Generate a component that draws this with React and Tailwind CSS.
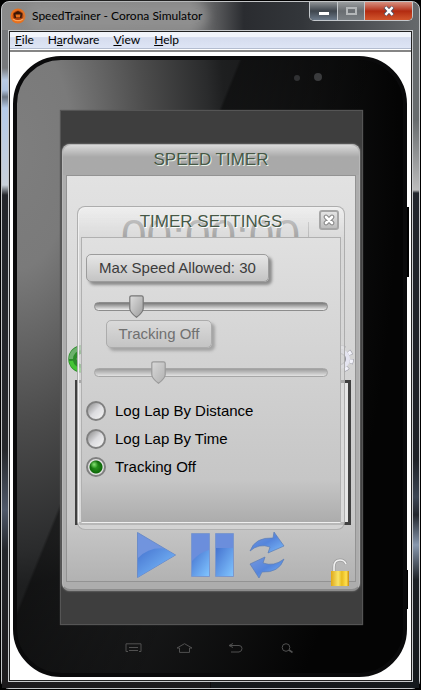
import { useState } from "react";

const menus = [
  ["", "F", "ile"],
  ["H", "a", "rdware"],
  ["", "V", "iew"],
  ["", "H", "elp"],
];

function TitleBar() {
  return (
    <header className="flex h-7 items-start pl-2">
      <div className="flex h-7 flex-1 items-center gap-[6px]">
        <svg viewBox="0 0 16 16" className="size-4 shrink-0" aria-hidden="true">
          <circle cx="8" cy="8" r="7.5" fill="#e8701c" />
          <circle cx="8" cy="8" r="5.4" fill="#a93a08" />
          <path d="M3.5 5.5 L8 3 L12.5 5.5 L11.5 10 H4.5 Z" fill="#3a1606" />
          <path d="M5.5 6.5 h5 l-.6 3 h-3.8 Z" fill="#e8701c" />
          <path d="M3 11 Q8 14.5 13 11" stroke="#ffa458" strokeWidth="1.4" fill="none" />
        </svg>
        <h1 className="rounded-full bg-[#969696]/60 font-[Lato,sans-serif] text-xs leading-4 whitespace-nowrap text-black shadow-[0_0_8px_6px_rgba(150,150,150,0.6)]">
          SpeedTrainer - Corona Simulator
        </h1>
      </div>
      <div className="mr-[6px] flex h-[19px] shrink-0 overflow-hidden rounded-b-[5px] border border-t-0 border-[#c4c8cc]">
        <button aria-label="Minimize" className="flex w-7 items-center justify-center border-r border-[#c4c8cc] bg-linear-to-b from-[#8f9396] via-[#3f464e] via-50% to-[#6c7a8a]">
          <span className="mt-1 h-[3px] w-[10px] bg-white" />
        </button>
        <button aria-label="Maximize" className="flex w-[27px] items-center justify-center border-r border-[#c4c8cc] bg-linear-to-b from-[#9a9d9f] via-[#696d71] via-50% to-[#7b8084]">
          <span className="h-[8px] w-[11px] border-2 border-[#b4b7b9]" />
        </button>
        <button aria-label="Close" className="flex w-[47px] items-center justify-center bg-linear-to-b from-[#d68f80] via-[#b22a10] via-50% to-[#d2552c]">
          <svg viewBox="0 0 12 10" className="h-[10px] w-3" aria-hidden="true">
            <path d="M2 1 L10 9 M10 1 L2 9" stroke="#4a4f63" strokeWidth="4" />
            <path d="M2.4 1.2 L9.6 8.8 M9.6 1.2 L2.4 8.8" stroke="#fff" strokeWidth="2.4" />
          </svg>
        </button>
      </div>
    </header>
  );
}

function MenuBar() {
  return (
    <nav className="flex h-[17px] items-center gap-[14px] border-b border-[#b4bdd0] bg-linear-to-b from-[#f2f5fb] from-30% via-[#d5dcee] via-35% to-[#dee5f5] pl-[5px]">
      {menus.map(([before, key, after]) => (
        <button key={key + after} className="font-[Lato,sans-serif] text-xs leading-4 text-black">
          {before}
          <u>{key}</u>
          {after}
        </button>
      ))}
    </nav>
  );
}

function Slider({ label, max, value, onChange, faded }) {
  const ratio = value / max;
  return (
    <div className={faded ? "relative flex h-[23px] items-center opacity-60" : "relative flex h-[23px] items-center"}>
      <input
        type="range"
        aria-label={label}
        min="0"
        max={max}
        value={value}
        onChange={(e) => onChange(Number(e.target.value))}
        className="block h-[9px] w-full appearance-none rounded-full border border-[#8c8c8c] bg-linear-to-b from-[#7a7a7a] via-[#b4b4b4] via-50% to-[#efefef] [&::-webkit-slider-thumb]:size-[15px] [&::-webkit-slider-thumb]:appearance-none [&::-webkit-slider-thumb]:opacity-0"
      />
      <svg
        viewBox="0 0 15 23"
        className="pointer-events-none absolute top-0 h-[23px] w-[15px]"
        style={{ left: `calc((100% - 15px) * ${ratio})` }}
        aria-hidden="true"
      >
        <defs>
          <linearGradient id="thumb" x1="0" y1="0" x2="1" y2="1">
            <stop offset="0" stopColor="#dedede" />
            <stop offset="1" stopColor="#9c9c9c" />
          </linearGradient>
        </defs>
        <path d="M2.5 .8 H12.5 Q14.2 .8 14.2 2.5 V14 Q13.500 18 7.5 22.3 Q1.500 18 .8 14 V2.5 Q.8 .8 2.5 .8 Z" fill="url(#thumb)" stroke="#777" strokeWidth="1.2" />
      </svg>
    </div>
  );
}

const options = ["Log Lap By Distance", "Log Lap By Time", "Tracking Off"];

function SettingsDialog() {
  const [speed, setSpeed] = useState(30);
  const [lap, setLap] = useState(26);
  const [mode, setMode] = useState("Tracking Off");
  return (
    <section
      role="dialog"
      aria-labelledby="dialog-title"
      className="absolute inset-x-[10px] top-[30px] rounded-lg border border-[#a2a2a2]/80 bg-linear-to-b from-[#f2f2f2]/80 via-[#d6d6d6]/60 via-10% to-[#d6d6d6]/80 px-[3px] pb-[6px] shadow-[inset_1px_1px_0_#f0f0f0]"
    >
      <header className="relative flex h-[30px] items-center justify-center">
        <h3 id="dialog-title" className="text-[17px] leading-5 text-[#465846] [text-shadow:1px_1px_0_#fff]">
          TIMER SETTINGS
        </h3>
        <button aria-label="Close settings" className="absolute top-[3px] right-[2px] flex size-5 items-center justify-center rounded-[3px] border-2 border-[#a6a6a6] bg-linear-to-b from-[#e4e4e4] to-[#bdbdbd]">
          <svg viewBox="0 0 12 12" className="size-3 shrink-0" aria-hidden="true">
            <path d="M3 3 L9 9 M9 3 L3 9" stroke="#888" strokeWidth="4.6" strokeLinecap="round" />
            <path d="M3 3 L9 9 M9 3 L3 9" stroke="#fff" strokeWidth="2.6" strokeLinecap="round" />
          </svg>
        </button>
      </header>
      <div className="h-[286px] border border-[#b0b0b0] border-b-[#efefef] bg-linear-to-b from-[#e0e0e0] via-[#c6c6c6] via-85% to-[#acacac] pt-4 pr-3 pl-1 text-[15px] leading-5">
        <output className="flex h-7 w-[183px] items-center justify-center rounded-[5px] border border-[#9c9c9c] bg-linear-to-b from-[#e6e6e6] to-[#c4c4c4] text-[#3c3c3c] shadow-[3px_3px_3px_#8c8c8c]">
          Max Speed Allowed: {speed}
        </output>
        <div className="mt-[13px] pl-2">
          <Slider label="Max speed allowed" max={190} value={speed} onChange={setSpeed} />
        </div>
        <output className="mt-[2px] ml-5 flex h-7 w-[106px] items-center justify-center rounded-[5px] border border-[#acacac] bg-linear-to-b from-[#dadada] to-[#c4c4c4] text-[#707070] shadow-[3px_3px_3px_#a4a4a4]">
          Tracking Off
        </output>
        <div className="mt-[13px] pl-2">
          <Slider label="Lap tracking" max={100} value={lap} onChange={setLap} faded />
        </div>
        <fieldset className="mt-[17px] flex flex-col gap-2">
          {options.map((o) => (
            <label key={o} className="flex h-5 items-center gap-[9px] text-black">
              <input
                type="radio"
                name="mode"
                checked={mode === o}
                onChange={() => setMode(o)}
                className="size-5 appearance-none rounded-full border-2 border-[#808080] bg-linear-to-br from-[#8a8a8a] via-[#dcdcdf] via-50% to-[#f6f6f6] checked:bg-[radial-gradient(circle_at_38%_34%,rgba(160,255,140,0.8)_0,transparent_4px),radial-gradient(circle,#2a9a20_0,#0f6a0a_6px,#e0e0e0_7px)]"
              />
              {o}
            </label>
          ))}
        </fieldset>
      </div>
    </section>
  );
}

function Controls() {
  return (
    <div className="flex h-[56px] items-center justify-center gap-[15px] pt-1">
      <svg width="0" height="0" className="absolute" aria-hidden="true">
        <defs>
          <linearGradient id="blue" x1="0" y1="0" x2="1" y2="1">
            <stop offset="0" stopColor="#7898dc" />
            <stop offset=".5" stopColor="#5585dc" />
            <stop offset="1" stopColor="#7cbcfa" />
          </linearGradient>
          <linearGradient id="deep" x1="0" y1="0" x2="1" y2="1">
            <stop offset="0" stopColor="#4674d0" />
            <stop offset="1" stopColor="#80c4ff" />
          </linearGradient>
        </defs>
      </svg>
      <button aria-label="Start">
        <svg viewBox="0 0 39 46" className="block h-[46px] w-[39px]">
          <path d="M.5 .5 L38.5 23 L.5 45.5 Z" fill="#7194de" stroke="#6b8cc8" />
          <path d="M1 26 Q12 15 27 16.500 L38 23 L1 45 Z" fill="url(#deep)" />
        </svg>
      </button>
      <button aria-label="Pause">
        <svg viewBox="0 0 43 44" className="block h-11 w-[43px]">
          <path d="M.5 .5 H18.500 V43.500 H.5 Z M24.500 .5 H42.500 V43.500 H24.500 Z" fill="#6b8edc" stroke="#7c98cc" />
          <path d="M1 28 Q9 19 18 17 V43 H1 Z" fill="url(#deep)" />
          <path d="M25 15 H42 V43 H25 Z" fill="url(#deep)" />
        </svg>
      </button>
      <button aria-label="Reset">
        <svg viewBox="0 0 36 48" className="block h-12 w-9" fill="url(#blue)" stroke="#5c7cb4" strokeWidth=".7">
          <path d="M1 20 Q6 6 24 7 L25 1 L35 15 L19 22 L21 16 Q10 12 1 20 Z" />
          <path d="M35 28 Q30 42 13 41 L10 47 L1 33 L16 26 L14 32 Q25 36 35 28 Z" />
        </svg>
      </button>
    </div>
  );
}

function TimerPanel() {
  return (
    <main className="relative mt-[33px] mr-[2px] mb-[33px] ml-[1px] rounded-lg border border-[#b8b8b8] border-b-2 border-b-[#8c8c8c] bg-[#adadad] px-[3px] pb-[7px] shadow-[0_0_2px_#999]">
      <h2 className="-mx-[3px] flex h-[30px] items-center justify-center rounded-t-lg bg-linear-to-b from-[#dadada] to-[#a9a9a9] to-40% text-[17px] leading-5 text-[#465846] [text-shadow:1px_1px_0_#e8f0e8]">
        SPEED TIMER
      </h2>
      <div className="relative border border-[#939393] bg-linear-to-b from-[#e2e2e2] via-[#c8c8c8] via-85% to-[#b2b2b2]">
        <div className="mt-[34px] flex h-[52px] items-start justify-center gap-2 pl-[8px] text-[46px] leading-[52px] text-[#555]">
          <time>00:00:00</time>
          <span className="mt-3 h-4 w-px bg-[#888]" />
        </div>
        <div className="mt-[83px] flex h-7 items-center justify-between pr-[1px] pl-[1px]">
          <svg viewBox="0 0 28 28" className="size-7" aria-hidden="true">
            <circle cx="14" cy="14" r="9.500" fill="none" stroke="#2c8c2a" strokeWidth="8.500" />
            <path d="M3 14 A11 11 0 0 1 14 3" fill="none" stroke="#6cb06c" strokeWidth="4" />
            <path d="M3 16 A11 11 0 0 0 14 25" fill="none" stroke="#44c434" strokeWidth="4" />
          </svg>
          <svg viewBox="0 0 28 28" className="size-7" aria-hidden="true">
            <circle cx="14" cy="14" r="11.500" fill="none" stroke="#9a9aa4" strokeWidth="4.500" strokeDasharray="4.600 4.430" />
            <circle cx="14" cy="14" r="11.500" fill="none" stroke="#f2f2fa" strokeWidth="3.400" strokeDasharray="3.800 5.230" strokeDashoffset="-.4" />
            <circle cx="14" cy="14" r="8" fill="none" stroke="#e4e4f0" strokeWidth="4" />
            <circle cx="14" cy="14" r="5.500" fill="none" stroke="#90909a" />
          </svg>
        </div>
        <div className="mt-[7px] mr-1 ml-2 h-[145px] border-[3px] border-[#404040] bg-[#e6e6e6]" />
        <Controls />
        <SettingsDialog />
      </div>
      <button aria-label="Unlock" className="absolute right-[9px] bottom-[2px]">
        <svg viewBox="0 0 20 29" className="block h-[29px] w-5">
          <defs>
            <linearGradient id="gold" x1="0" x2="1">
              <stop offset="0" stopColor="#e0a818" />
              <stop offset=".4" stopColor="#f8e468" />
              <stop offset=".6" stopColor="#e8bc20" />
              <stop offset=".85" stopColor="#ffe050" />
              <stop offset="1" stopColor="#c88c10" />
            </linearGradient>
          </defs>
          <path d="M4 13 V9 Q4 2 10 2 Q14.500 2 16 6" fill="none" stroke="#9c9c9c" strokeWidth="3" />
          <path d="M4 13 V9 Q4 2 10 2 Q14.500 2 16 6" fill="none" stroke="#f0f0f0" strokeWidth="1.600" />
          <rect x="1" y="13" width="18" height="15" fill="url(#gold)" />
        </svg>
      </button>
    </main>
  );
}

function DeviceKeys() {
  return (
    <div className="flex h-[48px] items-center justify-center gap-[34px] pr-[3px] *:flex *:w-[17px] *:justify-center">
      <button aria-label="Menu">
        <svg viewBox="0 0 17 10" className="h-[10px] w-[17px]" fill="none" stroke="#505050">
          <path d="M3 8.500 H1 V.8 H16 V8.500 H14 M4 4.500 H13 M4 7.500 H13" />
        </svg>
      </button>
      <button aria-label="Home">
        <svg viewBox="0 0 17 10" className="h-[10px] w-[17px]" fill="none" stroke="#505050">
          <path d="M1 5 L8.500 .7 L16 5 H13.500 V9.400 H3.500 V5 Z" />
        </svg>
      </button>
      <button aria-label="Back">
        <svg viewBox="0 0 15 10" className="h-[10px] w-[15px]" fill="none" stroke="#505050">
          <path d="M1 2.500 H11 Q14 2.500 14 5.500 T11 9 H3 M5 .5 L1 2.500 L5 4.500" />
        </svg>
      </button>
      <button aria-label="Search">
        <svg viewBox="0 0 12 10" className="h-[10px] w-3" fill="none" stroke="#505050">
          <circle cx="5" cy="4.500" r="3.800" />
          <path d="M8 7 L11.500 9.500" strokeWidth="1.600" />
        </svg>
      </button>
    </div>
  );
}

function Device() {
  return (
    <div className="relative m-1 mb-[3px] ml-[3px] flex-1 rounded-[48px] border-4 border-[#0a0a0b] bg-[linear-gradient(112deg,transparent_35%,rgba(0,0,0,0.4)_35.5%,rgba(0,0,0,0)_60%),radial-gradient(ellipse_52%_68%_at_0_15%,#7e7e7e_0%,#7a7a7a_28%,#4c4c4c_65%,#2a2b2c_96%,#1e1f20_104%,#040404_190%)] pr-[41px] pl-11">
      <span className="absolute top-[147px] -right-[6px] h-[70px] w-[2px] bg-black" />
      <span className="absolute -right-[5px] bottom-[64px] h-[39px] w-[1px] bg-black" />
      <div className="flex h-[51px] items-start justify-end gap-[14px] pt-[13px] pr-10">
        <span className="mt-[2px] size-[6px] rounded-full bg-[#303133]" />
        <span className="size-2 rounded-full bg-[#3a3b3d]" />
      </div>
      <div className="flow-root bg-[#3e3e3e] font-['Liberation_Sans',Arial,sans-serif] shadow-[0_0_1px_1px_#555]">
        <TimerPanel />
      </div>
      <DeviceKeys />
    </div>
  );
}

export default function App() {
  return (
    <div className="flex min-h-screen flex-col bg-black p-px">
      <div className="flex flex-1 flex-col rounded-lg border border-[#c2c4c6] bg-[linear-gradient(90deg,#8a8a8a_0%,#858585_45%,#2a2c30_58%,#33363a_72%,#66696c_100%)] bg-[length:100%_30px] bg-no-repeat">
        <TitleBar />
        <div className="flex flex-1 flex-col bg-[linear-gradient(180deg,#77797c_0px,#77797c_38px,#b9cbe4_50px,#b0c4e0_60px,#6c7683_67px,#b5cbe9_78px,#c8d0da_155px,#24262b_165px,#26282c_420px,#50596a_480px,#24262b_520px,#1c1a1c_100%),linear-gradient(180deg,#686c6e_0px,#686c6e_90px,#bcbcbc_160px,#22262c_163px,#1e2126_430px,#3c4654_467px,#22262c_485px,#8898ae_515px,#1c2024_550px,#15191c_100%)] bg-[length:50%_100%] bg-[position:left_top,right_top] bg-no-repeat px-[6px] pb-[6px]">
          <div className="flex flex-1 flex-col border border-[#c8cacc]">
            <div className="flex flex-1 flex-col border border-[#222] bg-white">
              <MenuBar />
              <div className="mt-[1px] h-[2px] bg-[#858585]" />
              <Device />
            </div>
          </div>
        </div>
      </div>
    </div>
  );
}
